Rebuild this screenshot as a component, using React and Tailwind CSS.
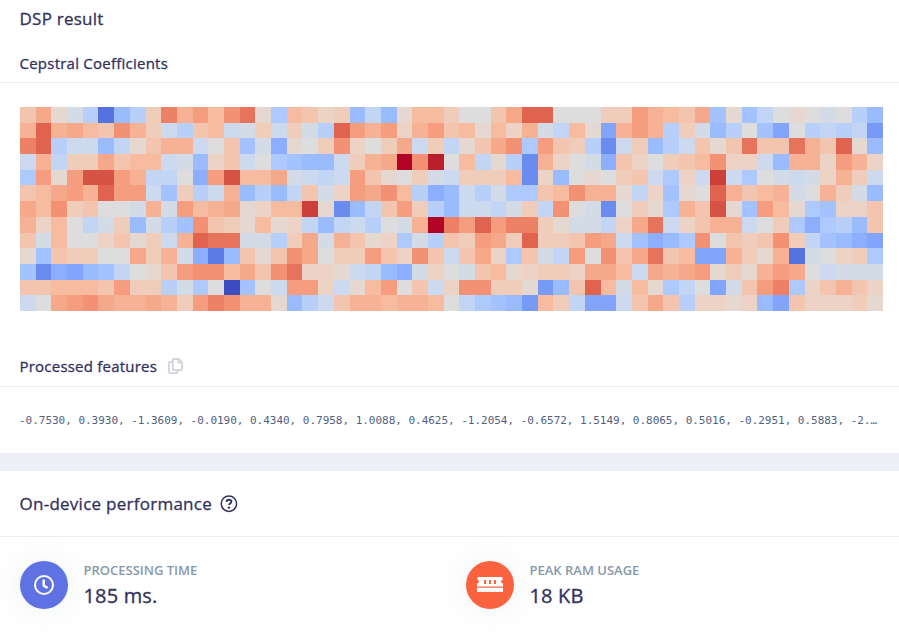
import React from "react";

// Diverging blue-to-red scale, 33 steps.
const SCALE = [
  "59,76,192", "68,90,204", "84,115,224", "92,124,230", "98,130,234", "106,140,239", "119,154,247",
  "130,165,251", "141,174,254", "155,187,255", "163,194,255", "174,201,253", "184,208,249",
  "194,213,244", "204,217,238", "211,219,230", "221,221,221", "229,216,209", "236,211,197",
  "240,205,187", "244,197,174", "247,187,160", "247,178,150", "246,168,138", "245,157,126",
  "242,145,115", "236,129,102", "230,115,92", "223,99,79", "214,82,68", "204,64,57",
  "188,31,44", "180,4,38",
].map((c) => `rgb(${c})`);

// One base-36 digit per cell, each an index into SCALE.
const ROWS = [
  "KNHFC29CJQM" + "OLPRHBLKIJ9" + "D9HLLJGGKNS" + "SGGGJJOMLKN" + "AHADGHGFGC9",
  "MSMNLKPMJEC" + "KLEFJEJFCSO" + "MOIMOKLHLIM" + "FDLH7MOMCJF" + "9CGA7GCDCD6",
  "QSCEE9DHKMM" + "EGKAF8HGJPI" + "GJNEJDHKNPB" + "OKJC5EJ9CEK" + "HKRKKRMKSH9",
  "EMDJJNKLLEF" + "9IKEGBA99EJ" + "MNWPVGLDHC5" + "MIGF8KIGJKL" + "PIIE9MMIOMI",
  "BOHOTTOMDDG" + "8OTLLNFEDEO" + "KHGJFEJJJL5" + "I9GHGJKEBIE" + "UEBGFEFIMJE",
  "KLNOMSOOEAJ" + "CEM9C9DKFIO" + "NPLC89ECFBB" + "KLPMMHDIAHG" + "SMKLMFGMJF9",
  "NLPJKGGFMFO" + "LMNHILLUH59" + "DKOJC9EEDFJ" + "DPGF5GJHBMK" + "THAOLHBAIIK",
  "MILGDFJ9FCA" + "PKJHLHID9DE" + "CGFMWQOSOQQ" + "JHFFDINREIK" + "MMEGJB8BC9K",
  "KFLGGIKHJEM" + "SRRFFCJNFMK" + "HIBFCKJONJS" + "JJKONEA89BP" + "GKJKPJDA987",
  "HAKJJGGNJMF" + "839KHKPNGJJ" + "OKIPKEKNIBK" + "FDOGPKNRKL7" + "7MJHM2FGIJB",
  "A5879ADGHKO" + "PPLNKPRIIHE" + "D98FIGFKLHI" + "JJINNLENMNO" + "HJHMONGEFFF",
  "KKLLLKOJJCF" + "BG0AGEOOIEH" + "LOGKEIPPJJH" + "69KSLFLHBDG" + "7FKOQBIKMKI",
  "EGNOPNMMNMJ" + "OQPMMH9CEKM" + "MLMMLGDBA96" + "LJD77EKNKCI" + "IHI97KIIIJH",
];

const FEATURES =
  "-0.7530, 0.3930, -1.3609, -0.0190, 0.4340, 0.7958, 1.0088, 0.4625, -1.2054, -0.6572, 1.5149, 0.8065, 0.5016, -0.2951, 0.5883, -2.…";

function Heatmap() {
  return (
    <svg
      className="block h-[204px] w-[863px]"
      viewBox="0 0 55 13"
      preserveAspectRatio="none"
      shapeRendering="crispEdges"
    >
      {ROWS.map((row, y) =>
        row.split("").map((c, x) => (
          <rect key={`${x}-${y}`} x={x} y={y} width="1" height="1" fill={SCALE[parseInt(c, 36)]} />
        ))
      )}
    </svg>
  );
}

function CopyIcon() {
  return (
    <svg className="ml-[11px] h-4 w-[15px]" viewBox="0 0 15 16" fill="none" stroke="#ced4da" strokeWidth="1.8">
      <path d="M4.5 3.9H2q-1 0-1 1v9.2q0 1 1 1h6.4q1 0 1-1v-1.6" />
      <path d="M5.8 1h5l3.2 3.2v6.9q0 1-1 1H5.8q-1 0-1-1V2q0-1 1-1z" />
      <path d="M10.2 1.4v3.4h3.4" strokeWidth="1.4" />
    </svg>
  );
}

function HelpIcon() {
  return (
    <svg className="ml-2 h-[18px] w-[18px]" viewBox="0 0 18 18" fill="none" stroke="#32325d">
      <circle cx="8.9" cy="8.7" r="7.7" strokeWidth="1.5" />
      <path d="M6.5 6.9c.1-1.5 1-2.2 2.4-2.2s2.5.8 2.5 2.1c0 1.7-2.4 1.7-2.4 3.3" strokeWidth="1.9" />
      <circle cx="9" cy="12.6" r="1.2" fill="#32325d" stroke="none" />
    </svg>
  );
}

function ClockIcon() {
  return (
    <svg className="mr-px h-5 w-5" viewBox="0 0 20 20" fill="none" stroke="#fff">
      <circle cx="10" cy="10" r="9" strokeWidth="2" />
      <path d="M9.7 4.5v6l3.9 2.6" strokeWidth="2.4" />
    </svg>
  );
}

function RamIcon() {
  return (
    <svg className="mb-px h-[15px] w-[26px]" viewBox="0 0 26 15" fill="#fff">
      <path
        fillRule="evenodd"
        d="M.5 0h25v3q-1.5.3-1.5 1.8t2 1.8V9.6H0v-3q2-.3 2-1.8T.5 3zM7 3v4h2V3zM12 3v4h2V3zM17 3v4h2V3z"
      />
      <path d="M0 10.8h26V15h-2.7v-.8h-.6v.8h-4.3v-.8h-.6v.8h-4.8v-.8h-.6v.8H8.2v-.8h-.6v.8H3.5v-.8h-.6v.8H0z" />
    </svg>
  );
}

function Stat({ label, value, color, children }) {
  return (
    <div className="flex w-[446px] shrink-0 items-center gap-4">
      <div
        className={`flex h-12 w-12 shrink-0 items-center justify-center rounded-full shadow-[0_0_32px_0_rgba(136,152,170,0.15)] ${color}`}
      >
        {children}
      </div>
      <div className="-ml-[0.5px] h-[51px] pt-[2px]">
        <div className="text-[13px] leading-[19px] font-semibold text-[#8898aa]">{label}</div>
        <div className="pt-px text-[20px] leading-[30px] font-medium tracking-[0.17px] text-[#32325d] [-webkit-text-stroke:0.35px_#32325d]">
          {value}
        </div>
      </div>
    </div>
  );
}

export default function App() {
  return (
    <div className="h-[635px] w-[899px] overflow-hidden bg-white font-['Open_Sans','Noto_Sans',sans-serif] text-[#32325d]">
      <section className="h-[453px]">
        <h2 className="h-[38px] px-[19.5px] text-[17px] leading-[38px] font-medium tracking-[0.24px] [-webkit-text-stroke:0.3px_#32325d]">
          DSP result
        </h2>
        <h3 className="h-[45px] border-b border-[#edeff2] px-[19.5px] pt-[7px] text-[15px] leading-[36px] font-medium tracking-[0.24px] [-webkit-text-stroke:0.3px_#32325d]">
          Cepstral Coefficients
        </h3>
        <div className="px-5 pt-6">
          <Heatmap />
        </div>
        <div className="mt-[35px] flex h-[41px] items-center border-b border-[#edeff2] px-[19.5px]">
          <h3 className="text-[15px] font-medium tracking-[0.22px] [-webkit-text-stroke:0.3px_#32325d]">
            Processed features
          </h3>
          <CopyIcon />
        </div>
        <div className="ml-[19px] mt-[26px] whitespace-nowrap font-['DejaVu_Sans_Mono',monospace] text-[11px] leading-4 tracking-[-0.022px] text-[#525f7f]">
          {FEATURES}
        </div>
      </section>
      <div className="h-[18px] bg-[#eceff5]" />
      <section>
        <div className="flex h-[66px] items-center border-b border-[#edeff2] px-[19.5px]">
          <h2 className="text-[17px] font-medium tracking-[0.26px] [-webkit-text-stroke:0.3px_#32325d]">
            On-device performance
          </h2>
          <HelpIcon />
        </div>
        <div className="flex px-5 pt-[22px]">
          <Stat label="PROCESSING TIME" value="185 ms." color="bg-[#5e72e4]">
            <ClockIcon />
          </Stat>
          <Stat label="PEAK RAM USAGE" value="18 KB" color="bg-[#fb6340]">
            <RamIcon />
          </Stat>
        </div>
      </section>
    </div>
  );
}
